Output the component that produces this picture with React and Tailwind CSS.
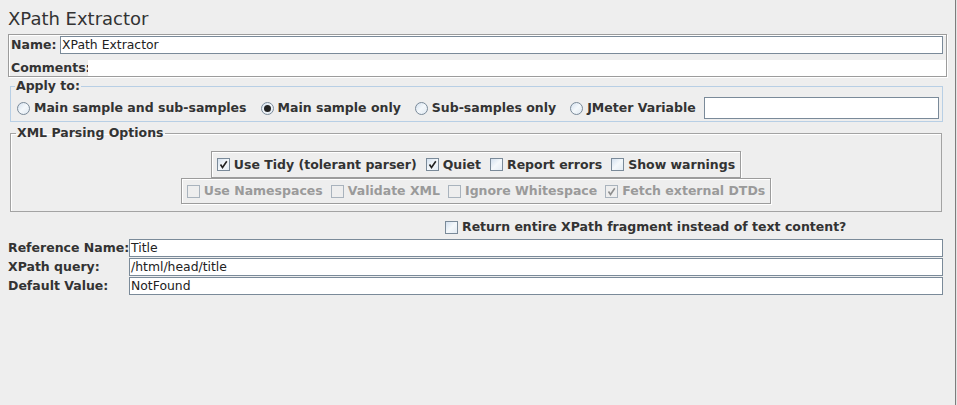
import React from 'react';

function Check({ checked, disabled }) {
  return (
    <span
      className={`inline-flex h-[13px] w-[13px] shrink-0 items-center justify-center border ${
        disabled
          ? 'border-[#a9b3bd] bg-[#eeeeee]'
          : 'border-[#7a8a99] bg-gradient-to-br from-[#d4e1ef] via-[#f4f8fb] to-[#e3ebf3]'
      }`}
    >
      {checked && (
        <svg width="9" height="9" viewBox="0 0 9 9">
          <path
            d="M1.5 4.5 L3.5 7.5 L7.8 1.2"
            fill="none"
            stroke={disabled ? '#8f8f8f' : '#222'}
            strokeWidth="1.6"
          />
        </svg>
      )}
    </span>
  );
}

function Radio({ selected }) {
  return (
    <span className="inline-flex h-[13px] w-[13px] shrink-0 items-center justify-center rounded-full border border-[#7a8a99] bg-gradient-to-br from-[#d4e1ef] via-[#f4f8fb] to-[#dfe8f1]">
      {selected && <span className="h-[7px] w-[7px] rounded-full bg-[#222]" />}
    </span>
  );
}

function Option({ children, checked, disabled }) {
  return (
    <label className="flex items-center gap-[4px] whitespace-nowrap">
      <Check checked={checked} disabled={disabled} />
      <span className={disabled ? 'text-[#9a9a9a]' : ''}>{children}</span>
    </label>
  );
}

function RadioOption({ children, selected }) {
  return (
    <label className="flex items-center gap-[4px] whitespace-nowrap">
      <Radio selected={selected} />
      <span>{children}</span>
    </label>
  );
}

function Field({ value }) {
  return (
    <div className="flex h-[18px] min-w-0 flex-1 items-center border border-[#7a8a99] bg-white pl-[1px] font-normal text-[12.4px] text-[#222]">
      {value}
    </div>
  );
}

function Row({ label, value }) {
  return (
    <div className="flex items-center">
      <span className="w-[121px] shrink-0 whitespace-nowrap">{label}</span>
      <Field value={value} />
    </div>
  );
}

export default function App() {
  return (
    <div className="flex min-h-[405px] w-full bg-[#eeeeee] font-['DejaVu_Sans',sans-serif] text-[12.5px] font-bold leading-[14px] text-[#333]">
      <div className="w-[956px] shrink-0 border-r border-[#7d7d7d]">
        <h1 className="pl-[8px] pt-[8px] text-[18px] font-normal leading-[22px] text-[#333]">XPath Extractor</h1>

        {/* name / comments */}
        <div className="ml-[8px] mt-[4px] w-[939px] border border-[#9c9c9c] shadow-[inset_1px_1px_0_#fff,1px_1px_0_#fff]">
          <div className="flex items-center pt-[1px] pr-[3px]">
            <span className="w-[51px] shrink-0 whitespace-nowrap pl-[2px]">Name:</span>
            <Field value="XPath Extractor" />
          </div>
          <div className="mt-[6px] flex h-[16px] items-center">
            <span className="w-[79px] shrink-0 whitespace-nowrap pl-[2px]">Comments:</span>
            <div className="h-full flex-1 bg-white" />
          </div>
        </div>

        {/* apply to */}
        <fieldset className="ml-[10px] mt-[2px] w-[933px] border border-[#b8cfe5] pl-[4px] pr-[3px] pb-[2px]">
          <legend className="px-[1px] leading-[14px]">Apply to:</legend>
          <div className="mt-[4px] flex h-[22px] items-center pl-[2px]">
            <div className="flex items-center gap-[14px]">
              <RadioOption>Main sample and sub-samples</RadioOption>
              <RadioOption selected>Main sample only</RadioOption>
              <RadioOption>Sub-samples only</RadioOption>
              <RadioOption>JMeter Variable</RadioOption>
            </div>
            <div className="ml-auto h-[22px] w-[235px] border border-[#7a8a99] bg-white" />
          </div>
        </fieldset>

        {/* xml parsing options */}
        <fieldset className="ml-[10px] mt-[4px] w-[932px] border border-[#a3a3a3] px-[5px] pb-[7px] shadow-[inset_1px_1px_0_#fff]">
          <legend className="px-[1px] leading-[14px]">XML Parsing Options</legend>
          <div className="mt-[11px] flex flex-col items-center">
            <div className="flex h-[27px] items-center gap-[9px] border border-[#9c9c9c] px-[5px] shadow-[inset_1px_1px_0_#fff,1px_1px_0_#fff]">
              <Option checked>Use Tidy (tolerant parser)</Option>
              <Option checked>Quiet</Option>
              <Option>Report errors</Option>
              <Option>Show warnings</Option>
            </div>
            <div className="flex h-[26px] items-center gap-[8px] border border-[#9c9c9c] px-[5px] shadow-[inset_1px_1px_0_#fff,1px_1px_0_#fff]">
              <Option disabled>Use Namespaces</Option>
              <Option disabled>Validate XML</Option>
              <Option disabled>Ignore Whitespace</Option>
              <Option disabled checked>Fetch external DTDs</Option>
            </div>
          </div>
        </fieldset>

        {/* return fragment */}
        <div className="mt-[5px] flex h-[20px] items-center pl-[445px]">
          <Option>Return entire XPath fragment instead of text content?</Option>
        </div>

        {/* reference rows */}
        <div className="mt-[2px] flex flex-col gap-[1px] pl-[8px] pr-[12px]">
          <Row label="Reference Name:" value="Title" />
          <Row label="XPath query:" value="/html/head/title" />
          <Row label="Default Value:" value="NotFound" />
        </div>
      </div>
      <div className="flex-1 bg-[#e4e4e4]" />
    </div>
  );
}
